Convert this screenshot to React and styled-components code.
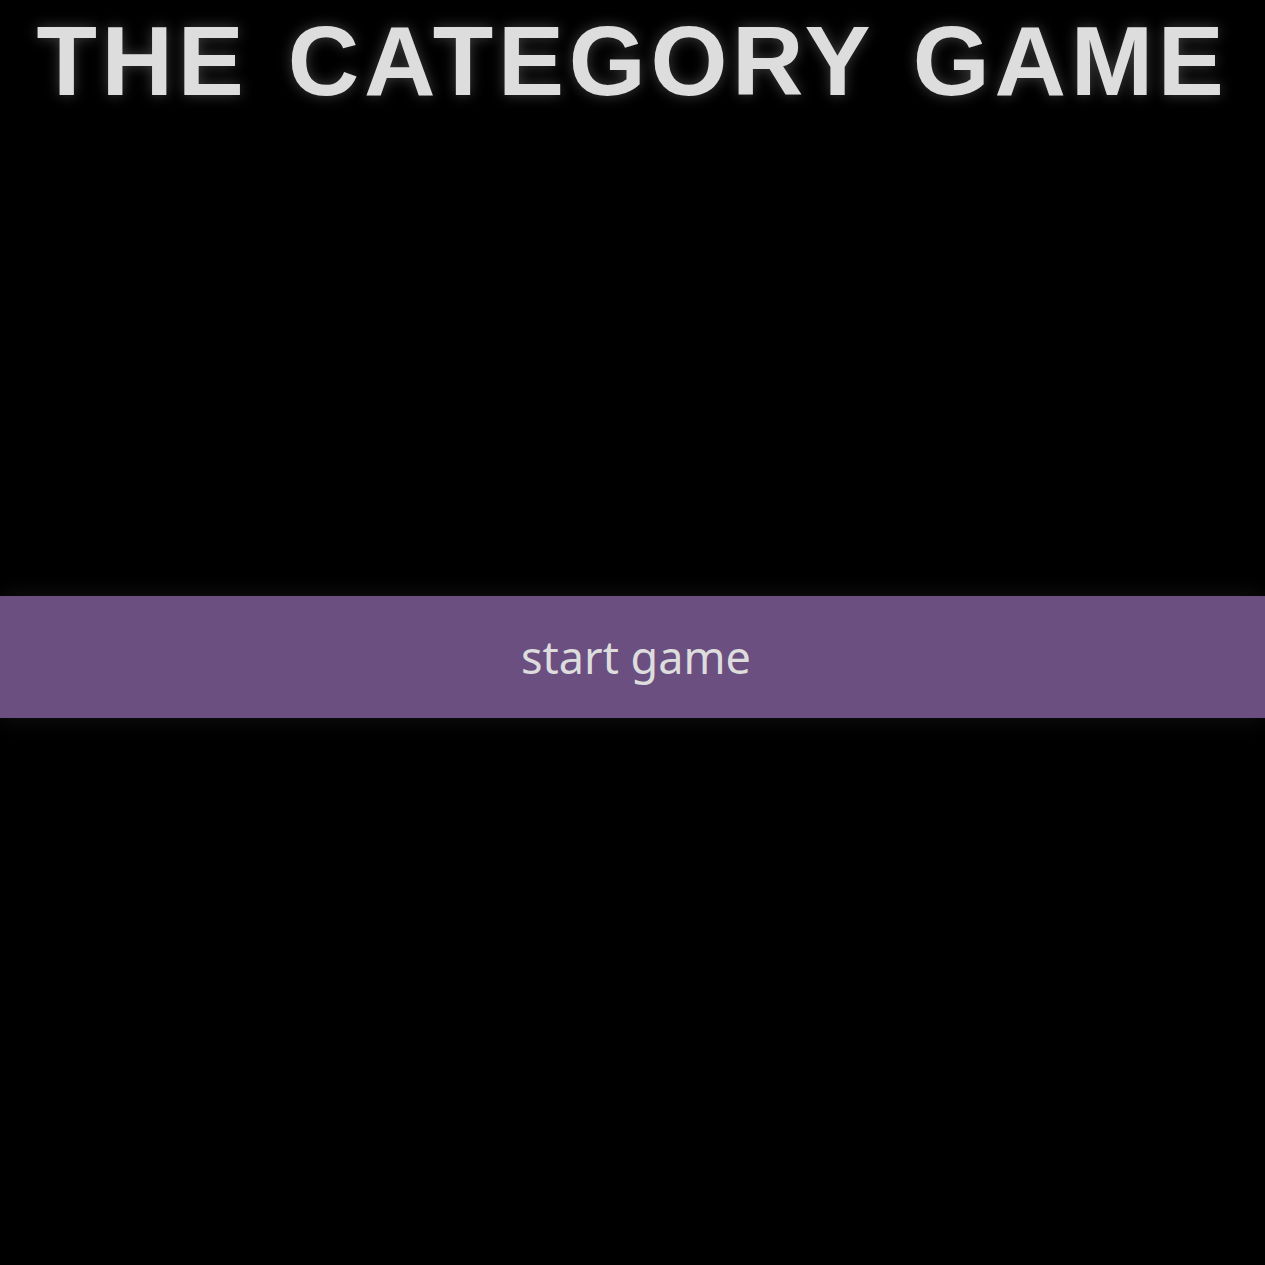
import React from 'react';
import styled, { createGlobalStyle } from 'styled-components';

const GlobalStyle = createGlobalStyle`
	html, body {
		margin: 0;
		padding: 0;
		background: #000;
	}
`;

const Page = styled.div`
	display: flex;
	flex-flow: column nowrap;
	min-height: 100vh;
	background: #000;
`;

const Title = styled.h1`
	margin: 0;
	padding-top: 4px;
	color: #dddddd;
	font-family: 'Liberation Sans', Arial, sans-serif;
	font-size: 99px;
	font-weight: bold;
	letter-spacing: 4.7px;
	word-spacing: 7px;
	text-align: center;
	text-transform: uppercase;
	white-space: nowrap;
	text-shadow: 0 0 14px rgba(255, 255, 255, 0.25);
`;

const Stage = styled.main`
	display: flex;
	flex-flow: column nowrap;
	justify-content: center;
	padding-top: 478px;
`;

const StartButton = styled.button`
	width: 100%;
	height: 122px;
	padding: 0 0 2px 7px;
	border: none;
	background-color: #6b4f80;
	color: #dddddd;
	font-family: 'Noto Sans', sans-serif;
	font-size: 45px;
	box-shadow: 0 0 24px rgba(255, 255, 255, 0.08);
	cursor: pointer;
`;

const App = () => {
	return (
		<Page>
			<GlobalStyle />
			<Title>The Category Game</Title>
			<Stage>
				<StartButton>start game</StartButton>
			</Stage>
		</Page>
	);
};

export default App;
